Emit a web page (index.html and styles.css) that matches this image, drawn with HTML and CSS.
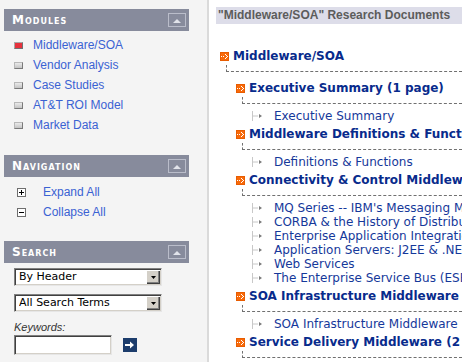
FILE: index.html
```html
<!DOCTYPE html>
<html>
<head>
<meta charset="utf-8">
<title>Middleware/SOA Research Documents</title>
<link rel="stylesheet" href="styles.css">
</head>
<body>
<svg class="defs" width="0" height="0" aria-hidden="true">
  <symbol id="node-icon" viewBox="0 0 9 9">
    <rect width="9" height="9" fill="#f86a0a"/>
    <rect x="0.5" y="0.5" width="8" height="8" fill="none" stroke="#e85c00"/>
    <path fill="#fff" d="M1 4h1v1H1zM3 4h1v1H3zM5 2h1v1H5zM6 3h1v1H6zM7 4h1v1H7zM6 5h1v1H6zM5 6h1v1H5z"/>
  </symbol>
  <symbol id="leaf-conn" viewBox="0 0 12 14">
    <path d="M0.5 2v10M1 7h5" stroke="#c8c8c8" fill="none"/>
    <path d="M7 5l3 2-3 2z" fill="#7a7a7a"/>
  </symbol>
  <symbol id="up-tri" viewBox="0 0 8 5">
    <path d="M0 5L4 1 8 5z" fill="#e1e3ea"/>
  </symbol>
</svg>
<div class="page">
  <aside class="sidebar">
    <section class="panel panel-modules">
      <div class="panel-head">
        <span class="panel-title">Modules</span>
        <span class="collapse-btn"><svg width="8" height="5"><use href="#up-tri"/></svg></span>
      </div>
      <ul class="module-list">
        <li><span class="mod-icon active"></span><a href="#">Middleware/SOA</a></li>
        <li><span class="mod-icon"></span><a href="#">Vendor Analysis</a></li>
        <li><span class="mod-icon"></span><a href="#">Case Studies</a></li>
        <li><span class="mod-icon"></span><a href="#">AT&amp;T ROI Model</a></li>
        <li><span class="mod-icon"></span><a href="#">Market Data</a></li>
      </ul>
    </section>
    <section class="panel panel-nav">
      <div class="panel-head">
        <span class="panel-title">Navigation</span>
        <span class="collapse-btn"><svg width="8" height="5"><use href="#up-tri"/></svg></span>
      </div>
      <ul class="nav-list">
        <li>
          <svg class="pm-icon" width="9" height="9" viewBox="0 0 9 9"><rect x="0.5" y="0.5" width="8" height="8" fill="#fff" stroke="#6e6e6e"/><path d="M2 4.5h5M4.5 2v5" stroke="#000"/></svg>
          <a href="#">Expand All</a>
        </li>
        <li>
          <svg class="pm-icon" width="9" height="9" viewBox="0 0 9 9"><rect x="0.5" y="0.5" width="8" height="8" fill="#fff" stroke="#6e6e6e"/><path d="M2 4.5h5" stroke="#000"/></svg>
          <a href="#">Collapse All</a>
        </li>
      </ul>
    </section>
    <section class="panel panel-search">
      <div class="panel-head">
        <span class="panel-title">Search</span>
        <span class="collapse-btn"><svg width="8" height="5"><use href="#up-tri"/></svg></span>
      </div>
      <form class="search-form">
        <div class="select">
          <select><option>By Header</option></select>
          <span class="select-btn"><svg width="5" height="3" viewBox="0 0 5 3"><path d="M0 0h5L2.5 3z" fill="#000"/></svg></span>
        </div>
        <div class="select">
          <select><option>All Search Terms</option></select>
          <span class="select-btn"><svg width="5" height="3" viewBox="0 0 5 3"><path d="M0 0h5L2.5 3z" fill="#000"/></svg></span>
        </div>
        <label class="kw-label">Keywords:</label>
        <div class="kw-row">
          <input class="kw-input" type="text">
          <span class="go-btn"><svg width="10" height="8" viewBox="0 0 10 8"><path d="M0 3h5V0.5L9 4 5 7.5V5H0z" fill="#fff"/></svg></span>
        </div>
      </form>
    </section>
  </aside>
  <main class="main">
    <div class="doc-title">"Middleware/SOA" Research Documents</div>
    <div class="tree">
      <div class="node l1">
        <div class="node-title"><svg class="node-icon" width="9" height="9"><use href="#node-icon"/></svg><a href="#">Middleware/SOA</a></div>
        <div class="branch"></div>
        <div class="children">
          <div class="node l2">
            <div class="node-title"><svg class="node-icon" width="9" height="9"><use href="#node-icon"/></svg><a href="#">Executive Summary (1 page)</a></div>
            <div class="branch"></div>
            <ul class="leaves">
              <li><svg class="conn" width="12" height="14"><use href="#leaf-conn"/></svg><a href="#">Executive Summary</a></li>
            </ul>
          </div>
          <div class="node l2">
            <div class="node-title"><svg class="node-icon" width="9" height="9"><use href="#node-icon"/></svg><a href="#">Middleware Definitions &amp; Functions</a></div>
            <div class="branch"></div>
            <ul class="leaves">
              <li><svg class="conn" width="12" height="14"><use href="#leaf-conn"/></svg><a href="#">Definitions &amp; Functions</a></li>
            </ul>
          </div>
          <div class="node l2">
            <div class="node-title"><svg class="node-icon" width="9" height="9"><use href="#node-icon"/></svg><a href="#">Connectivity &amp; Control Middleware</a></div>
            <div class="branch"></div>
            <ul class="leaves">
              <li><svg class="conn" width="12" height="14"><use href="#leaf-conn"/></svg><a href="#">MQ Series -- IBM's Messaging Middleware</a></li>
              <li><svg class="conn" width="12" height="14"><use href="#leaf-conn"/></svg><a href="#">CORBA &amp; the History of Distributed Objects</a></li>
              <li><svg class="conn" width="12" height="14"><use href="#leaf-conn"/></svg><a href="#">Enterprise Application Integration</a></li>
              <li><svg class="conn" width="12" height="14"><use href="#leaf-conn"/></svg><a href="#">Application Servers: J2EE &amp; .NET</a></li>
              <li><svg class="conn" width="12" height="14"><use href="#leaf-conn"/></svg><a href="#">Web Services</a></li>
              <li><svg class="conn" width="12" height="14"><use href="#leaf-conn"/></svg><a href="#">The Enterprise Service Bus (ESB)</a></li>
            </ul>
          </div>
          <div class="node l2">
            <div class="node-title"><svg class="node-icon" width="9" height="9"><use href="#node-icon"/></svg><a href="#">SOA Infrastructure Middleware (1 page)</a></div>
            <div class="branch"></div>
            <ul class="leaves">
              <li><svg class="conn" width="12" height="14"><use href="#leaf-conn"/></svg><a href="#">SOA Infrastructure Middleware</a></li>
            </ul>
          </div>
          <div class="node l2">
            <div class="node-title"><svg class="node-icon" width="9" height="9"><use href="#node-icon"/></svg><a href="#">Service Delivery Middleware (2 pages)</a></div>
            <div class="branch"></div>
          </div>
        </div>
      </div>
    </div>
  </main>
</div>
</body>
</html>
```
FILE: styles.css
```css
html, body {
  margin: 0;
  padding: 0;
}
body {
  width: 462px;
  height: 362px;
  overflow: hidden;
  background: #fff;
  font-family: "Liberation Sans", Arial, sans-serif;
}
.defs {
  position: absolute;
  width: 0;
  height: 0;
}
a {
  text-decoration: none;
}
.page {
  display: flex;
  height: 362px;
}

/* Sidebar */
.sidebar {
  flex: none;
  width: 209px;
  box-sizing: border-box;
  background: #f4f4f4;
  border-right: 2px solid #dadada;
  padding: 9px 0 0 4px;
}
.panel {
  width: 185px;
  margin-bottom: 20px;
}
.panel-nav {
  margin-bottom: 19px;
}
.panel-head {
  height: 22px;
  box-sizing: border-box;
  background: #878b9c;
  display: flex;
  align-items: center;
  justify-content: space-between;
  padding: 0 3px 0 8px;
}
.panel-title {
  color: #fff;
  font-family: "DejaVu Sans", Verdana, sans-serif;
  font-weight: bold;
  font-size: 12px;
  font-variant: small-caps;
  letter-spacing: 1px;
}
.collapse-btn {
  width: 18px;
  height: 14px;
  box-sizing: border-box;
  border: 1px solid #babdca;
  display: flex;
  align-items: center;
  justify-content: center;
}
.collapse-btn svg {
  display: block;
}
.module-list,
.nav-list,
.leaves {
  list-style: none;
  margin: 0;
}
.module-list {
  padding: 4px 0 0 10px;
}
.module-list li,
.nav-list li {
  height: 20px;
  display: flex;
  align-items: center;
  font-size: 12px;
}
.module-list a,
.nav-list a {
  color: #3a62d3;
}
.mod-icon {
  width: 9px;
  height: 7px;
  box-sizing: border-box;
  border: 1px solid;
  border-color: #b8b8b8 #7a7a7a #7a7a7a #b8b8b8;
  background: linear-gradient(#eaeaea, #c4c4c4);
  margin-right: 10px;
}
.mod-icon.active {
  background: #e6323d;
  border-color: #a8a8a8 #707070 #707070 #a8a8a8;
}
.nav-list {
  padding: 5px 0 0 13px;
}
.pm-icon {
  display: block;
  margin-right: 17px;
}

/* Search */
.search-form {
  padding: 5px 0 0 10px;
  margin: 0;
}
.select {
  width: 148px;
  height: 18px;
  box-sizing: border-box;
  display: flex;
  align-items: center;
  background: #fff;
  border: 1px solid;
  border-color: #808080 #e6e6e6 #e6e6e6 #808080;
  box-shadow: inset 1px 1px 0 #404040, inset -1px -1px 0 #d4d0c8;
  padding: 1px;
  margin-bottom: 8px;
}
.select select {
  flex: 1;
  min-width: 0;
  height: 14px;
  appearance: none;
  -webkit-appearance: none;
  border: none;
  background: transparent;
  font-family: "DejaVu Sans", Verdana, sans-serif;
  font-size: 11px;
  color: #000;
  padding: 0 0 0 3px;
  margin: 0;
  line-height: 14px;
  outline: none;
}
.select-btn {
  width: 14px;
  height: 14px;
  box-sizing: border-box;
  background: #d4d0c8;
  box-shadow: inset 1px 1px 0 #fff, inset -1px -1px 0 #404040, inset -2px -2px 0 #808080;
  display: flex;
  align-items: center;
  justify-content: center;
}
.select-btn svg {
  display: block;
}
.kw-label {
  display: block;
  margin-top: 6px;
  height: 14px;
  line-height: 14px;
  font-size: 11px;
  font-style: italic;
  color: #333;
}
.kw-row {
  display: flex;
  align-items: center;
  margin-top: 1px;
}
.kw-input {
  width: 98px;
  height: 20px;
  box-sizing: border-box;
  margin: 0;
  padding: 0 2px;
  background: #fff;
  border: 1px solid;
  border-color: #808080 #e6e6e6 #e6e6e6 #808080;
  box-shadow: inset 1px 1px 0 #404040, inset -1px -1px 0 #d4d0c8;
  outline: none;
}
.go-btn {
  margin-left: 11px;
  width: 14px;
  height: 14px;
  background: #1c3c6c;
  display: flex;
  align-items: center;
  justify-content: center;
}
.go-btn svg {
  display: block;
}

/* Main */
.main {
  flex: 1;
  min-width: 0;
  overflow: hidden;
  padding: 7px 0 0 7px;
  white-space: nowrap;
}
.doc-title {
  height: 17px;
  line-height: 17px;
  background: #dddde9;
  padding-left: 2px;
  font-weight: bold;
  font-size: 12px;
  color: #5c5c5c;
}
.tree {
  margin-top: 23px;
  padding-left: 4px;
}
.node-title {
  height: 18px;
  display: flex;
  align-items: center;
  font-family: "DejaVu Sans", Verdana, sans-serif;
  font-weight: bold;
  font-size: 12px;
}
.node-title a {
  color: #082b8c;
}
.node-icon {
  display: block;
  flex: none;
  margin-right: 4px;
}
.branch {
  margin-left: 6px;
  height: 6px;
  border-left: 1px dashed #707070;
  border-bottom: 1px dashed #707070;
}
.children {
  padding-top: 7px;
  margin-left: 16px;
}
.l2 {
  margin-bottom: 2px;
}
.leaves {
  padding: 5px 0 0 0;
  margin-left: 16px;
}
.leaves li {
  height: 14px;
  display: flex;
  align-items: center;
  font-family: "DejaVu Sans", Verdana, sans-serif;
  font-size: 12px;
}
.leaves a {
  color: #15389a;
}
.conn {
  display: block;
  flex: none;
  margin-right: 10px;
}
```
